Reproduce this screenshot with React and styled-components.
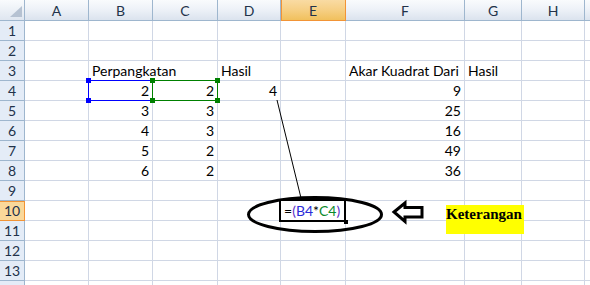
import React from "react";
import styled, { createGlobalStyle } from "styled-components";

const GlobalStyle = createGlobalStyle`
  html, body {
    margin: 0;
    padding: 0;
    background: #fff;
    overflow: hidden;
  }
  body {
    font-family: Lato, "Liberation Sans", sans-serif;
  }
`;

const columns = [
  { key: "A", width: 64 },
  { key: "B", width: 64 },
  { key: "C", width: 65 },
  { key: "D", width: 63 },
  { key: "E", width: 65 },
  { key: "F", width: 119 },
  { key: "G", width: 57 },
  { key: "H", width: 63 },
  { key: "", width: 60 },
];

const data = {
  3: { B: "Perpangkatan", D: "Hasil", F: "Akar Kuadrat Dari", G: "Hasil" },
  4: { B: 2, C: 2, D: 4, F: 9 },
  5: { B: 3, C: 3, F: 25 },
  6: { B: 4, C: 3, F: 16 },
  7: { B: 5, C: 2, F: 49 },
  8: { B: 6, C: 2, F: 36 },
};

const Sheet = styled.div`
  position: relative;
  width: 590px;
  height: 285px;
  overflow: hidden;
  display: grid;
  grid-template-columns: 25px ${columns.map((c) => c.width + "px").join(" ")};
  grid-template-rows: 21px repeat(14, 20px);
`;

const Corner = styled.div`
  position: relative;
  box-sizing: border-box;
  border-right: 1px solid #9eb6ce;
  border-bottom: 1px solid #9eb6ce;
  background: linear-gradient(#f9fbfd, #dfe6f0);

  &::after {
    content: "";
    position: absolute;
    left: 10px;
    top: 6px;
    width: 12px;
    height: 11px;
    background: #b6c2d2;
    clip-path: polygon(100% 0, 100% 100%, 0 100%);
  }
`;

const ColHead = styled.div`
  box-sizing: border-box;
  display: flex;
  align-items: center;
  justify-content: center;
  font-size: 14px;
  color: #22324a;
  border-right: 1px solid ${(p) => (p.$active ? "#f29436" : "#9eb6ce")};
  border-bottom: 1px solid ${(p) => (p.$active ? "#f29436" : "#9eb6ce")};
  box-shadow: ${(p) => (p.$active ? "inset 1px 0 0 #f29436" : "none")};
  background: ${(p) =>
    p.$active
      ? "linear-gradient(#f9dba3, #f6cf84 50%, #f1c05d)"
      : "linear-gradient(#f9fbfd, #eef2f8 45%, #dbe3ee)"};
`;

const RowHead = styled.div`
  box-sizing: border-box;
  display: flex;
  align-items: center;
  justify-content: center;
  font-size: 14px;
  color: #22324a;
  border-right: 1px solid ${(p) => (p.$active ? "#f29436" : "#9eb6ce")};
  border-bottom: 1px solid ${(p) => (p.$active ? "#f29436" : "#9eb6ce")};
  box-shadow: ${(p) => (p.$active ? "inset 0 1px 0 #f29436" : "none")};
  background: ${(p) => (p.$active ? "#fad89a" : "#e4ecf7")};
`;

const Cell = styled.div`
  position: relative;
  box-sizing: border-box;
  display: flex;
  align-items: flex-end;
  justify-content: ${(p) => (p.$right ? "flex-end" : "flex-start")};
  padding: 0 3px 1px 3px;
  border-right: 1px solid ${(p) => (p.$spill ? "transparent" : "#d0d7e5")};
  border-bottom: 1px solid #d0d7e5;
  font-size: 14px;
  line-height: 17px;
  color: #000;
  white-space: nowrap;
  overflow: visible;
  z-index: ${(p) => (p.$spill ? 1 : 0)};
`;

const Editor = styled.div`
  position: absolute;
  left: 279px;
  top: 199px;
  width: 67px;
  height: 23px;
  box-sizing: border-box;
  border: 2px solid #000;
  background: #fff;
  display: flex;
  align-items: flex-end;
  padding: 0 0 1px 3px;
  font-size: 14px;
  line-height: 17px;
  white-space: nowrap;
  z-index: 3;

  &::after {
    content: "";
    position: absolute;
    right: -4px;
    bottom: -4px;
    width: 4px;
    height: 4px;
    background: #000;
  }
`;

const Tok = styled.span`
  color: ${(p) => p.$color || "#000"};
`;

const RefBox = styled.div`
  position: absolute;
  left: ${(p) => p.$x}px;
  top: 80px;
  width: ${(p) => p.$w}px;
  height: 21px;
  box-sizing: border-box;
  border: 1px solid ${(p) => p.$color};
  z-index: 2;
`;

const Handle = styled.span`
  position: absolute;
  width: 5px;
  height: 5px;
  background: ${(p) => p.$color};
  left: ${(p) => (p.$r ? "auto" : "-3px")};
  right: ${(p) => (p.$r ? "-3px" : "auto")};
  top: ${(p) => (p.$b ? "auto" : "-3px")};
  bottom: ${(p) => (p.$b ? "-3px" : "auto")};
`;

const Shapes = styled.svg`
  position: absolute;
  left: 0;
  top: 0;
  width: 590px;
  height: 285px;
  pointer-events: none;
  z-index: 2;
`;

const Note = styled.div`
  position: absolute;
  left: 446px;
  top: 205px;
  width: 78px;
  height: 29px;
  background: #ffff00;
  font-family: "Liberation Serif", "Times New Roman", serif;
  font-weight: bold;
  font-size: 15px;
  line-height: 17px;
  padding-top: 1px;
  box-sizing: border-box;
  color: #000;
  white-space: nowrap;
  z-index: 3;
`;

function Ref({ x, w, color }) {
  return (
    <RefBox $x={x} $w={w} $color={color}>
      <Handle $color={color} />
      <Handle $color={color} $r />
      <Handle $color={color} $b />
      <Handle $color={color} $r $b />
    </RefBox>
  );
}

export default function App() {
  const rows = Array.from({ length: 14 }, (_, i) => i + 1);
  return (
    <>
      <GlobalStyle />
      <Sheet>
        <Corner />
        {columns.map((c, i) => (
          <ColHead key={i} $active={c.key === "E"}>
            {c.key}
          </ColHead>
        ))}
        {rows.map((r) => (
          <React.Fragment key={r}>
            <RowHead $active={r === 10}>{r < 14 ? r : ""}</RowHead>
            {columns.map((c, i) => {
              const v = data[r] && data[r][c.key];
              return (
                <Cell
                  key={i}
                  $right={typeof v === "number"}
                  $spill={r === 3 && c.key === "B"}
                >
                  {v}
                </Cell>
              );
            })}
          </React.Fragment>
        ))}

        <Ref x={88} w={65} color="#0000ff" />
        <Ref x={152} w={66} color="#008000" />

        <Shapes viewBox="0 0 590 285">
          <line x1="277" y1="100" x2="301" y2="198" stroke="#000" strokeWidth="1" />
          <ellipse cx="315" cy="214.5" rx="66.5" ry="17" fill="none" stroke="#000" strokeWidth="3" />
          <polygon
            points="394,212 405,203 405,207.5 422,207.5 422,217 405,217 405,221.5"
            fill="#fff"
            stroke="#000"
            strokeWidth="3"
            strokeLinejoin="miter"
          />
        </Shapes>

        <Editor>
          <Tok>=</Tok>
          <Tok $color="#5b2fc9">(</Tok>
          <Tok $color="#2b2bd8">B4</Tok>
          <Tok>*</Tok>
          <Tok $color="#0a8a2a">C4</Tok>
          <Tok $color="#5b2fc9">)</Tok>
        </Editor>

        <Note>Keterangan</Note>
      </Sheet>
    </>
  );
}
